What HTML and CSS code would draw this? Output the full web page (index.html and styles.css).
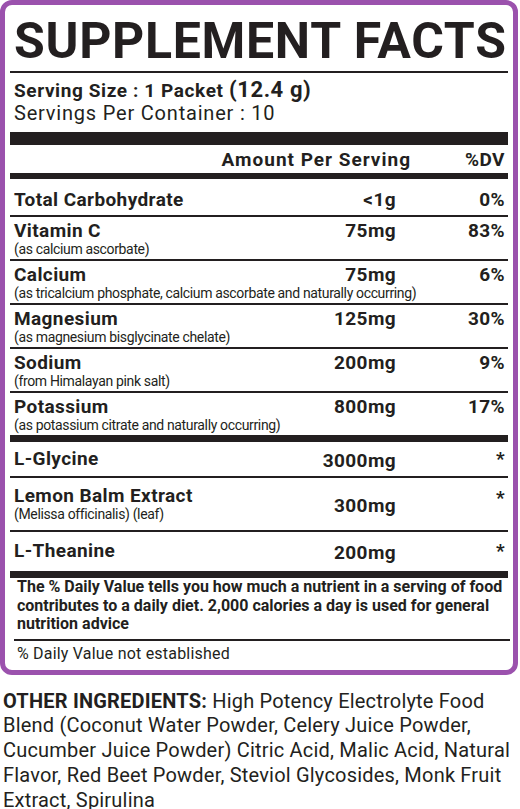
FILE: index.html
```html
<!DOCTYPE html>
<html lang="en">
<head>
    <meta charset="UTF-8">
    <meta name="viewport" content="width=device-width, initial-scale=1.0">
    <title>Supplement Facts</title>
    <link rel="stylesheet" href="styles.css">
</head>
<body>
    <div class="label">
        <h1 class="title">SUPPLEMENT FACTS</h1>

        <div class="serving">
            <p class="serving-size">Serving Size : 1 <span class="packet">Packet</span> <span class="grams">(12.4 g)</span></p>
            <p class="servings-per">Servings Per Container : 10</p>
        </div>

        <div class="head-row">
            <span class="head-amount">Amount Per Serving</span>
            <span class="head-dv">%DV</span>
        </div>

        <div class="rows">
            <div class="row single">
                <div class="name">Total Carbohydrate</div>
                <div class="amount">&lt;1g</div>
                <div class="dv">0%</div>
            </div>
            <div class="row">
                <div class="name">Vitamin C<small>(as calcium ascorbate)</small></div>
                <div class="amount">75mg</div>
                <div class="dv">83%</div>
            </div>
            <div class="row">
                <div class="name">Calcium<small>(as tricalcium phosphate, calcium ascorbate and naturally occurring)</small></div>
                <div class="amount">75mg</div>
                <div class="dv">6%</div>
            </div>
            <div class="row">
                <div class="name">Magnesium<small>(as magnesium bisglycinate chelate)</small></div>
                <div class="amount">125mg</div>
                <div class="dv">30%</div>
            </div>
            <div class="row">
                <div class="name">Sodium<small>(from Himalayan pink salt)</small></div>
                <div class="amount">200mg</div>
                <div class="dv">9%</div>
            </div>
            <div class="row last">
                <div class="name">Potassium<small>(as potassium citrate and naturally occurring)</small></div>
                <div class="amount">800mg</div>
                <div class="dv">17%</div>
            </div>
        </div>

        <div class="rows blend">
            <div class="row single">
                <div class="name">L-Glycine</div>
                <div class="amount">3000mg</div>
                <div class="dv">*</div>
            </div>
            <div class="row tall">
                <div class="name">Lemon Balm Extract<small>(Melissa officinalis) (leaf)</small></div>
                <div class="amount">300mg</div>
                <div class="dv">*</div>
            </div>
            <div class="row single spaced last">
                <div class="name">L-Theanine</div>
                <div class="amount">200mg</div>
                <div class="dv">*</div>
            </div>
        </div>

        <div class="footnote">
            <p class="daily">The % Daily Value tells you how much a nutrient in a serving of food contributes to a daily diet. 2,000 calories a day is used for general nutrition advice</p>
            <p class="not-established">% Daily Value not established</p>
        </div>
    </div>

    <p class="other"><strong>OTHER INGREDIENTS:</strong> High Potency Electrolyte Food Blend (Coconut Water Powder, Celery Juice Powder, Cucumber Juice Powder) Citric Acid, Malic Acid, Natural Flavor, Red Beet Powder, Steviol Glycosides, Monk Fruit Extract, Spirulina</p>
</body>
</html>
```

FILE: styles.css
```css
* {
    margin: 0;
    padding: 0;
    box-sizing: border-box;
}

body {
    font-family: Roboto, 'Liberation Sans', sans-serif;
    background-color: #fff;
    color: #231f20;
    width: 520px;
    overflow: hidden;
}

.label {
    width: 518px;
    border: 5px solid #9b52ad;
    border-radius: 12px;
    padding: 0 5px;
}

.title {
    font-size: 50px;
    font-weight: 700;
    line-height: 60px;
    padding: 6px 0 0 4px;
    letter-spacing: 0.7px;
    border-bottom: 2px solid #231f20;
    height: 68px;
    white-space: nowrap;
}

.serving {
    padding: 5px 4px 0;
    border-bottom: 13px solid #231f20;
    height: 72px;
}

.serving-size {
    font-size: 19px;
    font-weight: 700;
    line-height: 23px;
    letter-spacing: 0.6px;
}

.grams {
    font-size: 22px;
}

.servings-per {
    font-size: 20px;
    line-height: 23px;
    letter-spacing: 0.8px;
}

.head-row {
    display: grid;
    grid-template-columns: 1fr 94px;
    padding: 0 3px 0 4px;
    border-bottom: 6px solid #231f20;
    height: 34px;
    align-items: center;
    font-size: 19px;
    font-weight: 700;
    letter-spacing: 1px;
}

.head-amount,
.head-dv {
    text-align: right;
}

.head-dv {
    letter-spacing: 0.5px;
}

.rows {
    border-bottom: 7px solid #231f20;
}

.row {
    display: grid;
    grid-template-columns: minmax(0, 1fr) 110px 109px;
    padding: 4px 3px 2px 4px;
    border-bottom: 2px solid #231f20;
    font-weight: 700;
    font-size: 19px;
    line-height: 20px;
    letter-spacing: 0.4px;
}

.row.single {
    padding: 11px 3px 5px 4px;
}

.blend .row.single {
    padding: 5px 3px 5px 4px;
}

.blend .row.tall {
    padding: 8px 3px 8px 4px;
}

.blend .row.spaced {
    padding: 7px 3px 8px 4px;
}

.row.last {
    border-bottom: none;
}

.name small {
    display: block;
    font-size: 14px;
    font-weight: 400;
    line-height: 16px;
    letter-spacing: -0.35px;
    white-space: nowrap;
}

.amount,
.dv {
    text-align: right;
}

.blend .row {
    align-items: center;
}

.blend .amount {
    padding-top: 4px;
}

.blend .dv {
    align-self: start;
    padding-top: 2px;
}

.footnote {
    padding: 0 4px 6px 7px;
}

.daily {
    font-size: 16px;
    font-weight: 700;
    line-height: 18.5px;
    letter-spacing: 0;
    padding: 0 0 5px 3px;
    border-bottom: 2px solid #231f20;
    margin: 0 -6px 0 -3px;
}

.not-established {
    font-size: 16px;
    line-height: 20px;
    letter-spacing: 0.2px;
    padding-top: 3px;
}

.other {
    font-size: 20px;
    line-height: 24.8px;
    letter-spacing: 0.2px;
    padding: 14px 0 0 3px;
}
```
